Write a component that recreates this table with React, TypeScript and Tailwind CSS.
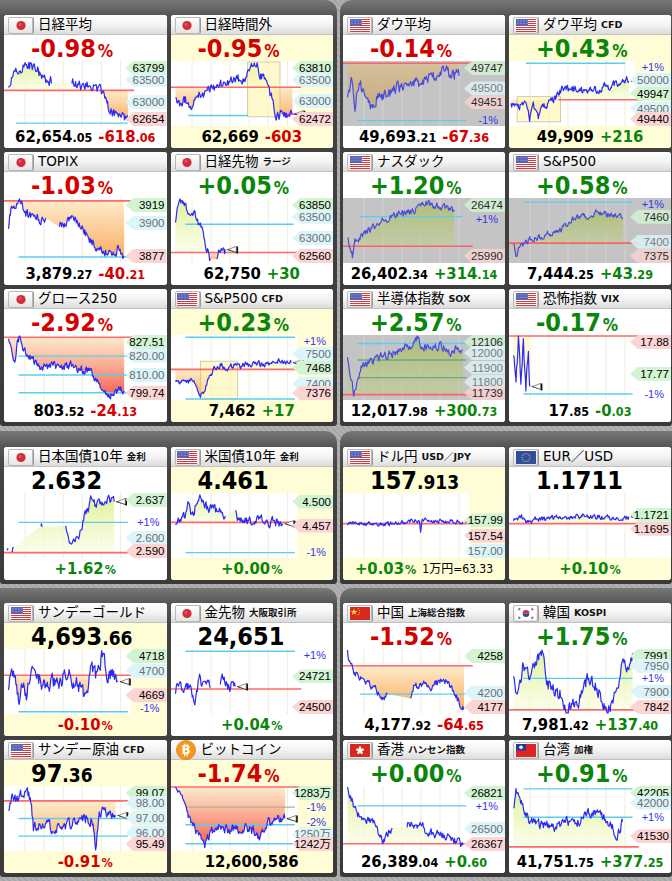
import React from 'react';

type Pt = [number, number];
type FlagKind = 'jp' | 'us' | 'eu' | 'cn' | 'kr' | 'hk' | 'tw' | 'btc';
type Theme = 'w' | 'y' | 'g' | 'wy';
type Val = { m: string; d?: string; p?: boolean; c?: 'r' | 'g' | 'k' };
type LineSpec = { y: number; c: 'r' | 'c' | 'g' | 'm' | 'k'; x0?: number; x1?: number };
type LabelSpec = { y: number; t: string; k: 'hi' | 'lo' | 'gr' | 'pc' };

interface CardData {
    flag: FlagKind;
    title: string;
    sub?: string;
    theme: Theme;
    top: Val;
    bot: Val[];
    note?: string;
    segs: Pt[][];
    amp: number;
    seed: number;
    ref: number;
    fill?: 'auto' | 'red' | 'none';
    lines: LineSpec[];
    labels: LabelSpec[];
    box?: [number, number, number, number];
    softBox?: [number, number, number, number];
    marker?: boolean;
}

const NUM_FONT = "font-['DejaVu_Sans_Condensed','DejaVu_Sans','Noto_Sans_CJK_JP',sans-serif]";
const TITLE_FONT = "font-['DejaVu_Sans','Noto_Sans_CJK_JP',sans-serif]";
const LABEL_FONT = "font-['Liberation_Sans','Noto_Sans_CJK_JP',sans-serif]";

const H = 65;
const px = (x: number) => 2 + x * 124;
const py = (y: number) => 1 + y * (H - 2);

function rng(seed: number) {
    let s = seed * 99991;
    return () => {
        s = (s + 0x6d2b79f5) | 0;
        let t = Math.imul(s ^ (s >>> 15), 1 | s);
        t = (t + Math.imul(t ^ (t >>> 7), 61 | t)) ^ t;
        return ((t ^ (t >>> 14)) >>> 0) / 4294967296;
    };
}

// turn key points into a jagged price line
function build(segs: Pt[][], amp: number, seed: number): Pt[][] {
    const r = rng(seed);
    return segs.map(seg => {
        if (seg.length < 2) return seg;
        const out: Pt[] = [];
        let n = 0;
        for (let i = 0; i < seg.length - 1; i++) {
            const [x0, y0] = seg[i];
            const [x1, y1] = seg[i + 1];
            const steps = Math.max(1, Math.round(((x1 - x0) * 124) / 0.7));
            for (let s = 0; s < steps; s++) {
                const f = s / steps;
                n = n * 0.45 + (r() - 0.5) * amp * 1.7;
                const y = Math.min(1, Math.max(0, y0 + (y1 - y0) * f + n));
                out.push([x0 + (x1 - x0) * f, y]);
            }
        }
        out.push(seg[seg.length - 1]);
        return out;
    });
}

const cards: CardData[] = [
    {
        flag: 'jp', title: '日経平均', theme: 'w',
        top: { m: '-0.98', p: true, c: 'r' },
        bot: [{ m: '62,654', d: '.05' }, { m: '-618', d: '.06', c: 'r' }],
        segs: [
            [[0.02, 0.45], [0.05, 0.25], [0.12, 0.12], [0.2, 0.06], [0.26, 0.15], [0.32, 0.3], [0.37, 0.33]],
            [[0.53, 0.33], [0.6, 0.4], [0.68, 0.36], [0.75, 0.45], [0.8, 0.62], [0.86, 0.82], [0.92, 0.78], [0.98, 0.93]],
        ],
        amp: 0.09, seed: 1, ref: 0.45,
        lines: [{ y: 0.45, c: 'r' }, { y: 0.97, c: 'c', x0: 0.08, x1: 0.98 }],
        labels: [{ y: 0.06, t: '63799', k: 'hi' }, { y: 0.28, t: '63500', k: 'gr' }, { y: 0.64, t: '63000', k: 'gr' }, { y: 0.96, t: '62654', k: 'lo' }],
    },
    {
        flag: 'jp', title: '日経時間外', theme: 'y',
        top: { m: '-0.95', p: true, c: 'r' },
        bot: [{ m: '62,669' }, { m: '-603', c: 'r' }],
        segs: [[[0.02, 0.62], [0.06, 0.68], [0.1, 0.6], [0.14, 0.75], [0.18, 0.55], [0.25, 0.5], [0.32, 0.4], [0.4, 0.35], [0.5, 0.3], [0.58, 0.22], [0.63, 0.1], [0.67, 0.0], [0.7, 0.2], [0.74, 0.3], [0.78, 0.5], [0.8, 0.6], [0.83, 0.88], [0.88, 0.8], [0.92, 0.85], [0.96, 0.82]]],
        amp: 0.08, seed: 2, ref: 0.4,
        lines: [{ y: 0.4, c: 'r' }, { y: 0.85, c: 'c', x0: 0.12, x1: 0.6 }, { y: 0.83, c: 'm', x0: 0.9, x1: 1.06 }],
        box: [0.6, 0.86, 0, 0.87], marker: true,
        labels: [{ y: 0.06, t: '63810', k: 'hi' }, { y: 0.28, t: '63500', k: 'gr' }, { y: 0.62, t: '63000', k: 'gr' }, { y: 0.96, t: '62472', k: 'lo' }],
    },
    {
        flag: 'jp', title: 'TOPIX', theme: 'w',
        top: { m: '-1.03', p: true, c: 'r' },
        bot: [{ m: '3,879', d: '.27' }, { m: '-40', d: '.21', c: 'r' }],
        segs: [
            [[0.02, 0.45], [0.04, 0.15], [0.08, 0.1], [0.12, 0.05], [0.16, 0.25], [0.22, 0.3], [0.28, 0.35], [0.32, 0.3]],
            [[0.43, 0.45], [0.5, 0.3], [0.56, 0.3], [0.6, 0.4], [0.66, 0.6], [0.72, 0.75], [0.8, 0.85], [0.85, 0.95], [0.9, 0.78], [0.95, 0.9]],
        ],
        amp: 0.08, seed: 3, ref: 0.03,
        lines: [{ y: 0.03, c: 'r' }, { y: 0.92, c: 'c', x0: 0.1, x1: 0.98 }],
        labels: [{ y: 0.04, t: '3919', k: 'hi' }, { y: 0.38, t: '3900', k: 'gr' }, { y: 0.97, t: '3877', k: 'lo' }],
    },
    {
        flag: 'jp', title: '日経先物', sub: 'ラージ', theme: 'w',
        top: { m: '+0.05', p: true, c: 'g' },
        bot: [{ m: '62,750' }, { m: '+30', c: 'g' }],
        segs: [
            [[0.02, 0.35], [0.04, 0.08], [0.08, 0.05], [0.12, 0.15], [0.17, 0.25], [0.22, 0.42], [0.26, 0.72], [0.3, 0.95]],
            [[0.35, 0.95], [0.37, 0.75], [0.4, 0.85], [0.42, 0.8]],
        ],
        amp: 0.08, seed: 4, ref: 0.85, marker: true,
        lines: [{ y: 0.85, c: 'r' }, { y: 0.4, c: 'c', x0: 0.1, x1: 0.97 }],
        labels: [{ y: 0.03, t: '63850', k: 'hi' }, { y: 0.28, t: '63500', k: 'gr' }, { y: 0.62, t: '63000', k: 'gr' }, { y: 0.97, t: '62560', k: 'lo' }],
    },
    {
        flag: 'jp', title: 'グロース250', theme: 'w',
        top: { m: '-2.92', p: true, c: 'r' },
        bot: [{ m: '803', d: '.52' }, { m: '-24', d: '.13', c: 'r' }],
        segs: [[[0.02, 0.1], [0.05, 0.35], [0.07, 0.5], [0.09, 0.15], [0.11, 0.0], [0.14, 0.25], [0.18, 0.3], [0.24, 0.45], [0.3, 0.5], [0.4, 0.48], [0.52, 0.47], [0.6, 0.52], [0.68, 0.55], [0.73, 0.7], [0.78, 0.85], [0.84, 0.95], [0.9, 0.85], [0.95, 0.87]]],
        amp: 0.07, seed: 5, ref: 0.02, fill: 'red',
        lines: [{ y: 0.02, c: 'r' }, { y: 0.32, c: 'c', x0: 0.1, x1: 0.98 }, { y: 0.62, c: 'c', x0: 0.1, x1: 0.98 }, { y: 0.9, c: 'c', x0: 0.1, x1: 0.98 }],
        labels: [{ y: 0.03, t: '827.51', k: 'hi' }, { y: 0.31, t: '820.00', k: 'gr' }, { y: 0.62, t: '810.00', k: 'gr' }, { y: 0.96, t: '799.74', k: 'lo' }],
    },
    {
        flag: 'us', title: 'S&P500', sub: 'CFD', theme: 'y',
        top: { m: '+0.23', p: true, c: 'g' },
        bot: [{ m: '7,462' }, { m: '+17', c: 'g' }],
        segs: [[[0.02, 0.72], [0.08, 0.75], [0.14, 0.7], [0.18, 0.78], [0.22, 0.98], [0.26, 0.8], [0.32, 0.55], [0.38, 0.45], [0.42, 0.5], [0.5, 0.47], [0.6, 0.45], [0.72, 0.44], [0.85, 0.41], [0.95, 0.42]]],
        amp: 0.05, seed: 6, ref: 0.53, box: [0.22, 0.52, 0.4, 1], marker: true,
        lines: [{ y: 0.02, c: 'c', x0: 0.1, x1: 0.98 }, { y: 0.53, c: 'r' }, { y: 1, c: 'c', x0: 0.1, x1: 0.98 }],
        labels: [{ y: 0.0, t: '+1%', k: 'pc' }, { y: 0.28, t: '7500', k: 'gr' }, { y: 0.5, t: '7468', k: 'hi' }, { y: 0.76, t: '7400', k: 'gr' }, { y: 0.99, t: '7376', k: 'lo' }],
    },
    {
        flag: 'us', title: 'ダウ平均', theme: 'g',
        top: { m: '-0.14', p: true, c: 'r' },
        bot: [{ m: '49,693', d: '.21' }, { m: '-67', d: '.36', c: 'r' }],
        segs: [[[0.02, 0.55], [0.05, 0.3], [0.08, 0.7], [0.12, 0.35], [0.16, 0.55], [0.2, 0.7], [0.26, 0.55], [0.35, 0.5], [0.45, 0.4], [0.55, 0.35], [0.65, 0.3], [0.75, 0.2], [0.82, 0.15], [0.87, 0.22], [0.92, 0.22]]],
        amp: 0.1, seed: 7, ref: 0.02,
        lines: [{ y: 0.02, c: 'r' }, { y: 0.93, c: 'c', x0: 0.1, x1: 0.98 }],
        labels: [{ y: 0.04, t: '49747', k: 'hi' }, { y: 0.42, t: '49500', k: 'gr' }, { y: 0.64, t: '49451', k: 'lo' }, { y: 0.96, t: '-1%', k: 'pc' }],
    },
    {
        flag: 'us', title: 'ダウ平均', sub: 'CFD', theme: 'y',
        top: { m: '+0.43', p: true, c: 'g' },
        bot: [{ m: '49,909' }, { m: '+216', c: 'g' }],
        segs: [[[0.0, 0.68], [0.08, 0.7], [0.12, 0.65], [0.15, 0.9], [0.18, 0.65], [0.22, 0.92], [0.26, 0.7], [0.3, 0.65], [0.36, 0.6], [0.4, 0.45], [0.5, 0.42], [0.6, 0.45], [0.72, 0.43], [0.82, 0.38], [0.9, 0.33], [0.95, 0.3]]],
        amp: 0.07, seed: 8, ref: 0.6, box: [0.05, 0.4, 0.55, 0.95], marker: true,
        lines: [{ y: 0.02, c: 'c', x0: 0.12, x1: 0.92 }, { y: 0.6, c: 'r', x0: 0.38, x1: 1.06 }],
        labels: [{ y: 0.0, t: '+1%', k: 'pc' }, { y: 0.28, t: '50000', k: 'gr' }, { y: 0.5, t: '49947', k: 'hi' }, { y: 0.74, t: '49500', k: 'gr' }, { y: 0.99, t: '49440', k: 'lo' }],
    },
    {
        flag: 'us', title: 'ナスダック', theme: 'g',
        top: { m: '+1.20', p: true, c: 'g' },
        bot: [{ m: '26,402', d: '.34' }, { m: '+314', d: '.14', c: 'g' }],
        segs: [[[0.02, 0.6], [0.04, 0.75], [0.06, 0.9], [0.08, 0.7], [0.12, 0.65], [0.18, 0.5], [0.25, 0.45], [0.32, 0.35], [0.4, 0.25], [0.48, 0.25], [0.56, 0.18], [0.62, 0.05], [0.7, 0.1], [0.78, 0.12], [0.84, 0.15], [0.88, 0.2]]],
        amp: 0.06, seed: 9, ref: 0.75,
        lines: [{ y: 0.28, c: 'c', x0: 0.12, x1: 0.95 }, { y: 0.75, c: 'r' }],
        labels: [{ y: 0.05, t: '26474', k: 'hi' }, { y: 0.32, t: '+1%', k: 'pc' }, { y: 0.95, t: '25990', k: 'lo' }],
    },
    {
        flag: 'us', title: 'S&P500', theme: 'g',
        top: { m: '+0.58', p: true, c: 'g' },
        bot: [{ m: '7,444', d: '.25' }, { m: '+43', d: '.29', c: 'g' }],
        segs: [[[0.02, 0.7], [0.04, 0.9], [0.08, 0.75], [0.14, 0.65], [0.22, 0.6], [0.3, 0.55], [0.4, 0.48], [0.46, 0.38], [0.52, 0.3], [0.62, 0.28], [0.7, 0.2], [0.78, 0.25], [0.84, 0.22], [0.9, 0.32]]],
        amp: 0.05, seed: 10, ref: 0.7,
        lines: [{ y: 0.05, c: 'c', x0: 0.1, x1: 0.98 }, { y: 0.7, c: 'r' }],
        labels: [{ y: 0.0, t: '+1%', k: 'pc' }, { y: 0.28, t: '7460', k: 'hi' }, { y: 0.68, t: '7400', k: 'gr' }, { y: 0.96, t: '7375', k: 'lo' }],
    },
    {
        flag: 'us', title: '半導体指数', sub: 'SOX', theme: 'g',
        top: { m: '+2.57', p: true, c: 'g' },
        bot: [{ m: '12,017', d: '.98' }, { m: '+300', d: '.73', c: 'g' }],
        segs: [[[0.02, 0.3], [0.04, 0.6], [0.07, 0.9], [0.1, 0.75], [0.13, 0.45], [0.18, 0.45], [0.25, 0.35], [0.35, 0.3], [0.45, 0.2], [0.52, 0.15], [0.58, 0.05], [0.62, 0.15], [0.7, 0.2], [0.78, 0.15], [0.84, 0.25], [0.88, 0.22], [0.95, 0.22]]],
        amp: 0.07, seed: 11, ref: 0.93,
        lines: [{ y: 0.12, c: 'c', x0: 0.1, x1: 0.98 }, { y: 0.38, c: 'g', x0: 0.1, x1: 0.98 }, { y: 0.66, c: 'g', x0: 0.1, x1: 0.98 }, { y: 0.93, c: 'r' }],
        labels: [{ y: 0.04, t: '12106', k: 'hi' }, { y: 0.27, t: '12000', k: 'gr' }, { y: 0.5, t: '11900', k: 'gr' }, { y: 0.73, t: '11800', k: 'gr' }, { y: 0.96, t: '11739', k: 'lo' }],
    },
    {
        flag: 'us', title: '恐怖指数', sub: 'VIX', theme: 'w',
        top: { m: '-0.17', p: true, c: 'g' },
        bot: [{ m: '17', d: '.85' }, { m: '-0', d: '.03', c: 'g' }],
        segs: [[[0.02, 0.3], [0.04, 0.75], [0.06, 0.05], [0.08, 0.8], [0.1, 0.1], [0.12, 0.85], [0.14, 0.2], [0.15, 0.8]]],
        amp: 0.1, seed: 12, ref: 0, fill: 'none', softBox: [0.02, 0.16, 0, 0.65], marker: true,
        lines: [{ y: 0.0, c: 'r' }, { y: 0.92, c: 'c', x0: 0.1, x1: 0.98 }],
        labels: [{ y: 0.02, t: '17.88', k: 'lo' }, { y: 0.6, t: '17.77', k: 'hi' }, { y: 0.94, t: '-1%', k: 'pc' }],
    },
    {
        flag: 'jp', title: '日本国債10年', sub: '金利', theme: 'w',
        top: { m: '2.632', c: 'k' },
        bot: [{ m: '+1.62', p: true, c: 'g' }],
        segs: [
            [[0.01, 0.85], [0.015, 0.86]],
            [[0.05, 0.9], [0.06, 0.86]],
            [[0.28, 0.5], [0.29, 0.52]],
            [[0.48, 0.52], [0.5, 0.72], [0.52, 0.77], [0.55, 0.72], [0.58, 0.65], [0.6, 0.62], [0.63, 0.3], [0.66, 0.25], [0.68, 0.05], [0.72, 0.2], [0.75, 0.05], [0.78, 0.2], [0.82, 0.1], [0.87, 0.12]],
        ],
        amp: 0.07, seed: 13, ref: 0.93, marker: true,
        lines: [{ y: 0.93, c: 'r' }, { y: 0.45, c: 'c', x0: 0.1, x1: 0.98 }],
        labels: [{ y: 0.08, t: '2.637', k: 'hi' }, { y: 0.45, t: '+1%', k: 'pc' }, { y: 0.7, t: '2.600', k: 'gr' }, { y: 0.95, t: '2.590', k: 'lo' }],
    },
    {
        flag: 'us', title: '米国債10年', sub: '金利', theme: 'y',
        top: { m: '4.461', c: 'k' },
        bot: [{ m: '+0.00', p: true, c: 'g' }],
        segs: [
            [[0.02, 0.45], [0.08, 0.4], [0.12, 0.2], [0.16, 0.35], [0.2, 0.05], [0.26, 0.2], [0.32, 0.25], [0.38, 0.3], [0.42, 0.35]],
            [[0.5, 0.3], [0.54, 0.45], [0.62, 0.43], [0.7, 0.38], [0.76, 0.45], [0.82, 0.42], [0.88, 0.47]],
        ],
        amp: 0.08, seed: 14, ref: 0.45, marker: true,
        lines: [{ y: 0.45, c: 'r' }, { y: 0.93, c: 'c', x0: 0.1, x1: 0.98 }],
        labels: [{ y: 0.12, t: '4.500', k: 'hi' }, { y: 0.5, t: '4.457', k: 'lo' }, { y: 0.93, t: '-1%', k: 'pc' }],
    },
    {
        flag: 'us', title: 'ドル円', sub: 'USD／JPY', theme: 'y',
        top: { m: '157', d: '.913', c: 'k' },
        bot: [{ m: '+0.03', p: true, c: 'g' }], note: '1万円=63.33',
        segs: [[[0.02, 0.47], [0.3, 0.48], [0.5, 0.45], [0.58, 0.42], [0.6, 0.45], [0.61, 0.62], [0.62, 0.42], [0.8, 0.43], [0.95, 0.44]]],
        amp: 0.035, seed: 15, ref: 0.47, fill: 'none', marker: true,
        lines: [{ y: 0.47, c: 'r' }],
        labels: [{ y: 0.42, t: '157.99', k: 'hi' }, { y: 0.66, t: '157.54', k: 'lo' }, { y: 0.92, t: '157.00', k: 'gr' }],
    },
    {
        flag: 'eu', title: 'EUR／USD', theme: 'wy',
        top: { m: '1.1711', c: 'k' },
        bot: [{ m: '+0.10', p: true, c: 'g' }],
        segs: [[[0.02, 0.4], [0.08, 0.35], [0.12, 0.47], [0.2, 0.4], [0.35, 0.38], [0.5, 0.35], [0.7, 0.36], [0.85, 0.37], [0.95, 0.36]]],
        amp: 0.045, seed: 16, ref: 0.47, marker: true,
        lines: [{ y: 0.47, c: 'r' }],
        labels: [{ y: 0.33, t: '1.1721', k: 'hi' }, { y: 0.55, t: '1.1695', k: 'lo' }],
    },
    {
        flag: 'us', title: 'サンデーゴールド', theme: 'y',
        top: { m: '4,693', d: '.66', c: 'k' },
        bot: [{ m: '-0.10', p: true, c: 'r' }],
        segs: [[[0.02, 0.55], [0.04, 0.35], [0.06, 0.4], [0.08, 0.6], [0.1, 0.85], [0.13, 0.5], [0.17, 0.7], [0.2, 0.35], [0.24, 0.4], [0.28, 0.5], [0.32, 0.65], [0.36, 0.5], [0.42, 0.5], [0.48, 0.4], [0.54, 0.45], [0.6, 0.6], [0.64, 0.8], [0.68, 0.3], [0.72, 0.4], [0.78, 0.05], [0.82, 0.45], [0.86, 0.35], [0.9, 0.5]]],
        amp: 0.13, seed: 17, ref: 0.4, marker: true,
        lines: [{ y: 0.4, c: 'r' }, { y: 0.98, c: 'c', x0: 0.1, x1: 0.98 }],
        labels: [{ y: 0.03, t: '4718', k: 'hi' }, { y: 0.33, t: '4700', k: 'gr' }, { y: 0.72, t: '4669', k: 'lo' }, { y: 0.98, t: '-1%', k: 'pc' }],
    },
    {
        flag: 'jp', title: '金先物', sub: '大阪取引所', theme: 'w',
        top: { m: '24,651', c: 'k' },
        bot: [{ m: '+0.04', p: true, c: 'g' }],
        segs: [
            [[0.02, 0.62], [0.05, 0.5], [0.08, 0.7], [0.12, 0.55], [0.15, 0.6], [0.17, 0.95], [0.19, 0.6], [0.22, 0.45], [0.25, 0.6], [0.3, 0.6]],
            [[0.38, 0.5], [0.4, 0.42], [0.44, 0.6], [0.5, 0.58]],
        ],
        amp: 0.1, seed: 18, ref: 0.62, fill: 'none', marker: true,
        lines: [{ y: 0.02, c: 'c', x0: 0.1, x1: 0.98 }, { y: 0.62, c: 'r' }],
        labels: [{ y: 0.02, t: '+1%', k: 'pc' }, { y: 0.42, t: '24721', k: 'hi' }, { y: 0.96, t: '24500', k: 'lo' }],
    },
    {
        flag: 'us', title: 'サンデー原油', sub: 'CFD', theme: 'y',
        top: { m: '97', d: '.36', c: 'k' },
        bot: [{ m: '-0.91', p: true, c: 'r' }],
        segs: [[[0.02, 0.3], [0.05, 0.15], [0.1, 0.2], [0.15, 0.05], [0.2, 0.2], [0.22, 0.65], [0.3, 0.6], [0.4, 0.65], [0.5, 0.6], [0.6, 0.55], [0.65, 0.5], [0.7, 0.55], [0.72, 1.0], [0.75, 0.45], [0.78, 0.35], [0.82, 0.4], [0.85, 0.5], [0.88, 0.45]]],
        amp: 0.09, seed: 19, ref: 0.22, marker: true,
        lines: [{ y: 0.22, c: 'r' }, { y: 0.5, c: 'c', x0: 0.1, x1: 0.98 }, { y: 0.78, c: 'c', x0: 0.1, x1: 0.98 }],
        labels: [{ y: 0.02, t: '99.07', k: 'hi' }, { y: 0.25, t: '98.00', k: 'gr' }, { y: 0.49, t: '97.00', k: 'gr' }, { y: 0.73, t: '96.00', k: 'gr' }, { y: 0.99, t: '95.49', k: 'lo' }],
    },
    {
        flag: 'btc', title: 'ビットコイン', theme: 'y',
        top: { m: '-1.74', p: true, c: 'r' },
        bot: [{ m: '12,600,586' }],
        segs: [[[0.02, 0.0], [0.05, 0.1], [0.1, 0.35], [0.15, 0.6], [0.2, 0.75], [0.25, 0.95], [0.3, 0.75], [0.38, 0.6], [0.45, 0.7], [0.55, 0.65], [0.65, 0.7], [0.7, 0.85], [0.75, 0.6], [0.82, 0.5], [0.9, 0.5]]],
        amp: 0.08, seed: 20, ref: 0.0, fill: 'red', marker: true,
        lines: [{ y: 0.0, c: 'r' }, { y: 0.32, c: 'k', x0: 0.1, x1: 0.98 }, { y: 0.6, c: 'c', x0: 0.1, x1: 0.98 }, { y: 0.9, c: 'c', x0: 0.1, x1: 0.98 }],
        labels: [{ y: 0.02, t: '1283万', k: 'hi' }, { y: 0.32, t: '-1%', k: 'pc' }, { y: 0.55, t: '-2%', k: 'pc' }, { y: 0.75, t: '1250万', k: 'gr' }, { y: 0.98, t: '1242万', k: 'lo' }],
    },
    {
        flag: 'cn', title: '中国', sub: '上海総合指数', theme: 'w',
        top: { m: '-1.52', p: true, c: 'r' },
        bot: [{ m: '4,177', d: '.92' }, { m: '-64', d: '.65', c: 'r' }],
        segs: [
            [[0.02, 0.0], [0.03, 0.2], [0.06, 0.3], [0.1, 0.4], [0.15, 0.5], [0.2, 0.55], [0.25, 0.6], [0.28, 0.75], [0.31, 0.8], [0.34, 0.7]],
            [[0.53, 0.72], [0.56, 0.55], [0.6, 0.6], [0.64, 0.5], [0.7, 0.6], [0.76, 0.5], [0.8, 0.45], [0.85, 0.6], [0.9, 0.75], [0.94, 0.9], [0.96, 0.92]],
        ],
        amp: 0.06, seed: 21, ref: 0.25,
        lines: [{ y: 0.25, c: 'r' }, { y: 0.7, c: 'c', x0: 0.12, x1: 0.97 }],
        labels: [{ y: 0.05, t: '4258', k: 'hi' }, { y: 0.68, t: '4200', k: 'gr' }, { y: 0.96, t: '4177', k: 'lo' }],
    },
    {
        flag: 'kr', title: '韓国', sub: 'KOSPI', theme: 'w',
        top: { m: '+1.75', p: true, c: 'g' },
        bot: [{ m: '7,981', d: '.42' }, { m: '+137', d: '.40', c: 'g' }],
        segs: [[[0.02, 0.5], [0.05, 0.8], [0.1, 0.2], [0.15, 0.4], [0.2, 0.2], [0.25, 0.0], [0.3, 0.55], [0.4, 0.7], [0.45, 0.95], [0.55, 0.8], [0.62, 0.45], [0.68, 0.55], [0.75, 0.85], [0.8, 0.9], [0.85, 0.6], [0.9, 0.2], [0.95, 0.3], [0.98, 0.05]]],
        amp: 0.11, seed: 22, ref: 0.95,
        lines: [{ y: 0.95, c: 'r' }, { y: 0.45, c: 'c', x0: 0.1, x1: 0.98 }],
        labels: [{ y: 0.03, t: '7991', k: 'hi' }, { y: 0.25, t: '7950', k: 'gr' }, { y: 0.45, t: '+1%', k: 'pc' }, { y: 0.66, t: '7900', k: 'gr' }, { y: 0.98, t: '7842', k: 'lo' }],
    },
    {
        flag: 'hk', title: '香港', sub: 'ハンセン指数', theme: 'w',
        top: { m: '+0.00', p: true, c: 'g' },
        bot: [{ m: '26,389', d: '.04' }, { m: '+0', d: '.60', c: 'g' }],
        segs: [
            [[0.02, 0.0], [0.05, 0.2], [0.12, 0.5], [0.18, 0.5], [0.25, 0.6], [0.3, 0.85], [0.38, 0.65]],
            [[0.5, 0.6], [0.6, 0.6], [0.7, 0.75], [0.85, 0.8], [0.95, 0.92]],
        ],
        amp: 0.07, seed: 23, ref: 0.9,
        lines: [{ y: 0.9, c: 'r' }, { y: 0.3, c: 'c', x0: 0.1, x1: 0.98 }],
        labels: [{ y: 0.03, t: '26821', k: 'hi' }, { y: 0.3, t: '+1%', k: 'pc' }, { y: 0.66, t: '26500', k: 'gr' }, { y: 0.96, t: '26367', k: 'lo' }],
    },
    {
        flag: 'tw', title: '台湾', sub: '加権', theme: 'w',
        top: { m: '+0.91', p: true, c: 'g' },
        bot: [{ m: '41,751', d: '.75' }, { m: '+377', d: '.25', c: 'g' }],
        segs: [[[0.02, 0.3], [0.04, 0.05], [0.1, 0.3], [0.15, 0.55], [0.25, 0.6], [0.35, 0.65], [0.45, 0.55], [0.55, 0.55], [0.65, 0.4], [0.72, 0.45], [0.8, 0.55], [0.85, 0.8], [0.9, 0.55]]],
        amp: 0.08, seed: 24, ref: 0.95,
        lines: [{ y: 0.03, c: 'c', x0: 0.1, x1: 0.98 }, { y: 0.48, c: 'c', x0: 0.1, x1: 0.98 }, { y: 0.95, c: 'r' }],
        labels: [{ y: 0.0, t: '42205', k: 'hi' }, { y: 0.25, t: '42000', k: 'gr' }, { y: 0.48, t: '+1%', k: 'pc' }, { y: 0.78, t: '41530', k: 'lo' }],
    },
];

const FlagArt: React.FC<{ k: FlagKind }> = ({ k }) => {
    if (k === 'jp') {
        return (
            <svg width="20" height="13" viewBox="0 0 20 13">
                <circle cx="10" cy="6.5" r="4.6" fill="#d42a3a" />
                <circle cx="9" cy="5.4" r="1.6" fill="#ec6a74" opacity="0.6" />
            </svg>
        );
    }
    if (k === 'us') {
        return (
            <svg width="20" height="13" viewBox="0 0 20 13">
                <rect width="20" height="13" fill="#ffffff" />
                {[0, 2, 4, 6, 8, 10, 12].map(y => <rect key={y} y={y} width="20" height="1" fill="#d8383c" />)}
                <rect width="12" height="7" fill="#5a62b4" />
                {[2, 5, 8, 11].map(x => [1.8, 4.2].map(y => <circle key={`${x}-${y}`} cx={x} cy={y} r="0.5" fill="#c8ccf0" />))}
            </svg>
        );
    }
    if (k === 'eu') {
        return (
            <svg width="20" height="13" viewBox="0 0 20 13">
                <rect width="20" height="13" fill="#2f4f9e" />
                {Array.from({ length: 12 }, (_, i) => {
                    const a = (i / 12) * Math.PI * 2;
                    return <circle key={i} cx={10 + Math.cos(a) * 4} cy={6.5 + Math.sin(a) * 4} r="0.6" fill="#f2d23a" />;
                })}
            </svg>
        );
    }
    if (k === 'cn') {
        return (
            <svg width="20" height="13" viewBox="0 0 20 13">
                <rect width="20" height="13" fill="#d8291c" />
                <polygon points="4,1.5 4.9,4 7.5,4 5.4,5.5 6.2,8 4,6.5 1.8,8 2.6,5.5 0.5,4 3.1,4" fill="#f7d23a" />
                <circle cx="8.5" cy="1.8" r="0.6" fill="#f7d23a" />
                <circle cx="9.5" cy="3.6" r="0.6" fill="#f7d23a" />
                <circle cx="9.5" cy="5.8" r="0.6" fill="#f7d23a" />
                <circle cx="8.5" cy="7.5" r="0.6" fill="#f7d23a" />
            </svg>
        );
    }
    if (k === 'kr') {
        return (
            <svg width="20" height="13" viewBox="0 0 20 13">
                <rect width="20" height="13" fill="#ffffff" />
                <path d="M6.6 6.5a3.4 3.4 0 0 1 6.8 0z" fill="#d43040" />
                <path d="M6.6 6.5a3.4 3.4 0 0 0 6.8 0z" fill="#2a4aa0" />
                <path d="M2 2.5l2-1.5M2.6 3.3l2-1.5M15.5 1l2 1.5M15 1.8l2 1.5M2 10.5l2 1.5M2.6 9.7l2 1.5M15.5 12l2-1.5M15 11.2l2-1.5" stroke="#222" strokeWidth="0.7" />
            </svg>
        );
    }
    if (k === 'hk') {
        return (
            <svg width="20" height="13" viewBox="0 0 20 13">
                <rect width="20" height="13" fill="#d8291c" />
                {[0, 72, 144, 216, 288].map(a => (
                    <ellipse key={a} cx="10" cy="4.4" rx="1.2" ry="2.1" fill="#ffffff" transform={`rotate(${a} 10 6.5)`} />
                ))}
            </svg>
        );
    }
    // tw
    return (
        <svg width="20" height="13" viewBox="0 0 20 13">
            <rect width="20" height="13" fill="#e02424" />
            <rect width="10" height="6.5" fill="#1f3c9c" />
            <circle cx="5" cy="3.25" r="1.8" fill="#ffffff" />
        </svg>
    );
};

const Flag: React.FC<{ k: FlagKind }> = ({ k }) => {
    if (k === 'btc') {
        return (
            <svg width="20" height="20" viewBox="0 0 20 20" className="ml-[5px] shrink-0">
                <circle cx="10" cy="10" r="9.5" fill="#f39a1e" />
                <circle cx="10" cy="10" r="9.5" fill="none" stroke="#d87c10" strokeWidth="0.8" />
                <path d="M8.6 3.8v2.4M11 3.8v2.4M8.6 13.8v2.4M11 13.8v2.4" stroke="#ffffff" strokeWidth="1.2" />
                <text x="10.2" y="14.4" textAnchor="middle" fontSize="12" fontWeight="bold" fill="#ffffff" fontFamily="DejaVu Sans, sans-serif">B</text>
            </svg>
        );
    }
    return (
        <div className="ml-[4px] self-end flex h-[17px] w-[25px] shrink-0 items-center justify-center rounded-[2px] border border-[#b8b8b8] bg-[linear-gradient(#ffffff,#e4e4e4)] shadow-[1px_0_0_#9a9a9a]">
            <FlagArt k={k} />
        </div>
    );
};

const colorOf = (c?: 'r' | 'g' | 'k') => (c === 'r' ? 'text-[#d40000]' : c === 'g' ? 'text-[#0a850a]' : 'text-black');

const BigVal: React.FC<{ v: Val }> = ({ v }) => (
    <span className={`${colorOf(v.c)} leading-none`}>
        <span className="text-[25px]">{v.m}</span>
        {v.d && <span className="text-[19px]">{v.d}</span>}
        {v.p && <span className="ml-[2px] text-[17px]">%</span>}
    </span>
);

const SmallVal: React.FC<{ v: Val }> = ({ v }) => (
    <span className={`${colorOf(v.c)} leading-none`}>
        <span className="text-[16.5px]">{v.m}</span>
        {v.d && <span className="text-[12.5px]">{v.d}</span>}
        {v.p && <span className="ml-[1px] text-[12.5px]">%</span>}
    </span>
);

const Chart: React.FC<{ c: CardData; id: string }> = ({ c, id }) => {
    const gray = c.theme === 'g';
    const segs = build(c.segs, c.amp, c.seed).map(s => s.map(([x, y]) => [px(x), py(y)] as Pt));
    const all = segs.flat();
    const ry = py(c.ref);
    const fx = all[0][0];
    const lx = all[all.length - 1][0];
    const ly = all[all.length - 1][1];
    const upPts = all.map(([x, y]) => `${x.toFixed(1)},${Math.min(y, ry).toFixed(1)}`).join(' ') + ` ${lx},${ry} ${fx},${ry}`;
    const dnPts = all.map(([x, y]) => `${x.toFixed(1)},${Math.max(y, ry).toFixed(1)}`).join(' ') + ` ${lx},${ry} ${fx},${ry}`;
    const fill = c.fill ?? 'auto';

    const stroke = { r: '#ff5a5a', c: '#5ccdf2', g: '#6aaa86', m: '#ff3cff', k: '#b8ae92' };
    const grid = gray ? '#d4d4d4' : '#efedd6';
    const bg = gray
        ? 'bg-[#c4c4c4]'
        : c.theme === 'y'
            ? 'bg-[linear-gradient(to_right,#ffffff_78%,#fefdd8_78%)]'
            : 'bg-white';

    return (
        <div className={`relative h-[65px] ${bg}`}>
            <svg className="absolute inset-0" width="100%" height="65" viewBox="0 0 162 65" preserveAspectRatio="none">
                <defs>
                    <linearGradient id={`${id}u`} x1="0" y1="0" x2="0" y2="1">
                        <stop offset="0" stopColor={gray ? '#a6bd62' : '#dcef8c'} stopOpacity={gray ? 0.8 : 0.9} />
                        <stop offset="1" stopColor={gray ? '#c2cc94' : '#fbfde4'} stopOpacity={gray ? 0.6 : 0.7} />
                    </linearGradient>
                    <linearGradient id={`${id}d`} x1="0" y1="0" x2="0" y2="1">
                        <stop offset="0" stopColor={gray ? '#d6bf94' : '#fde8c2'} stopOpacity="0.85" />
                        <stop offset="1" stopColor={fill === 'red' ? '#f2483a' : gray ? '#c6a874' : '#f9a24c'} stopOpacity="0.9" />
                    </linearGradient>
                </defs>
                {[21, 40, 59, 78, 97, 116].map(x => (
                    <line key={x} x1={x} y1="0" x2={x} y2={H} stroke={grid} strokeWidth="1" />
                ))}
                {c.softBox && (
                    <rect x={px(c.softBox[0])} y={py(c.softBox[2])} width={px(c.softBox[1]) - px(c.softBox[0])} height={py(c.softBox[3]) - py(c.softBox[2])} fill="#fffad0" />
                )}
                {fill !== 'none' && (
                    <>
                        <polygon points={upPts} fill={`url(#${id}u)`} />
                        <polygon points={dnPts} fill={`url(#${id}d)`} />
                    </>
                )}
                {c.box && (
                    <rect x={px(c.box[0])} y={py(c.box[2])} width={px(c.box[1]) - px(c.box[0])} height={py(c.box[3]) - py(c.box[2])} fill="#fff6a6" fillOpacity="0.55" stroke="#c8c29c" strokeWidth="0.8" />
                )}
                {c.lines.map((l, i) => {
                    const x0 = l.x0 ?? -0.02;
                    const x1 = l.x1 ?? 1.03;
                    return (
                        <line key={i} x1={px(x0)} y1={py(l.y)} x2={px(x1)} y2={py(l.y)} stroke={stroke[l.c]} strokeWidth={l.c === 'r' ? 1.6 : 1.4} strokeOpacity={l.c === 'r' ? 0.9 : 1} />
                    );
                })}
                {segs.map((s, i) => (
                    <polyline key={i} points={s.map(([x, y]) => `${x.toFixed(1)},${y.toFixed(1)}`).join(' ')} fill="none" stroke={gray ? '#4c4cdc' : '#2a2af6'} strokeWidth="1.2" strokeLinejoin="round" />
                ))}
                {c.marker && (
                    <>
                        <polyline points={`${lx + 2},${ly} ${lx + 12},${ly + 3}`} fill="none" stroke="#111" strokeWidth="1" />
                        <polygon points={`${lx + 3},${ly} ${lx + 11},${ly - 3} ${lx + 11},${ly + 3}`} fill="#ffffff" stroke="#444" strokeWidth="0.6" />
                        <line x1={lx + 12} y1={ly - 3} x2={lx + 12} y2={ly + 4} stroke="#111" strokeWidth="1.6" />
                    </>
                )}
            </svg>
            {c.labels.map((lb, i) => {
                if (lb.k === 'pc') {
                    const top = Math.min(Math.max(py(lb.y) - 6, 0), H - 12);
                    return (
                        <div key={i} className={`${LABEL_FONT} absolute right-[7px] text-[11px] leading-[12px] text-[#3434ee]`} style={{ top }}>
                            {lb.t}
                        </div>
                    );
                }
                const top = Math.min(Math.max(py(lb.y) - 7, 0), H - 14);
                const tone =
                    lb.k === 'hi'
                        ? 'bg-[#d2f4d2] text-black'
                        : lb.k === 'lo'
                            ? 'bg-[#fbd4d4] text-black'
                            : 'bg-[#dcf5fb] text-[#6e6e6e]';
                return (
                    <div
                        key={i}
                        className={`${LABEL_FONT} ${tone} ${gray ? 'opacity-80' : ''} absolute right-0 h-[14px] w-[41px] pr-[2px] text-right text-[11.5px] leading-[14px] [clip-path:polygon(8px_0,100%_0,100%_100%,8px_100%,0_50%)]`}
                        style={{ top }}
                    >
                        {lb.t}
                    </div>
                );
            })}
        </div>
    );
};

const Card: React.FC<{ c: CardData; id: string }> = ({ c, id }) => {
    const yellowTop = c.theme === 'y';
    const yellowBot = c.theme === 'y' || c.theme === 'wy';
    return (
        <div className="flex h-[133px] flex-col overflow-hidden rounded-[3px] bg-white">
            <div className="flex h-[20px] items-center border-b border-[#c2c2c2] bg-[linear-gradient(#ffffff,#f4f4f4_50%,#dcdcdc)]">
                <Flag k={c.flag} />
                <span className={`${TITLE_FONT} ml-[5px] whitespace-nowrap text-[13.5px] leading-none text-black`}>{c.title}</span>
                {c.sub && <span className={`${TITLE_FONT} ml-[4px] whitespace-nowrap text-[9.5px] font-bold leading-none text-[#111]`}>{c.sub}</span>}
            </div>
            <div className={`${NUM_FONT} flex h-[26px] items-center pl-[27px] font-bold ${yellowTop ? 'bg-[#fefdd5]' : 'bg-white'}`}>
                <BigVal v={c.top} />
            </div>
            <Chart c={c} id={id} />
            <div className={`${NUM_FONT} flex h-[22px] items-center justify-center gap-[6px] font-bold ${yellowBot ? 'bg-[#fefdd5]' : 'bg-white'}`}>
                {c.bot.map((v, i) => <SmallVal key={i} v={v} />)}
                {c.note && <span className={`${NUM_FONT} text-[12px] font-normal leading-none text-black`}>{c.note}</span>}
            </div>
        </div>
    );
};

const Panel: React.FC<{ list: number[]; side: 'l' | 'r'; pad: string }> = ({ list, side, pad }) => (
    <div
        className={`${side === 'l' ? 'w-[337px] shrink-0 rounded-tr-[12px] pl-[4px] pr-[4px]' : 'flex-1 rounded-tl-[12px] pl-[3px] pr-[1px]'} ${pad} rounded-b-[3px] pb-[4px] bg-[linear-gradient(to_bottom,#787878,#545454_16px,#444444_40px,#3a3a3a)]`}
    >
        <div className="grid grid-cols-2 gap-[4px]">
            {list.map(i => <Card key={i} c={cards[i]} id={`cd${i}`} />)}
        </div>
    </div>
);

export default function App() {
    return (
        <div className="flex h-[881px] w-[672px] flex-col overflow-hidden bg-[repeating-linear-gradient(45deg,#b2b2b2_0px,#b2b2b2_2px,#a6a6a6_2px,#a6a6a6_4px)]">
            <div className="flex h-[426px] gap-[3px]">
                <Panel list={[0, 1, 2, 3, 4, 5]} side="l" pad="pt-[15px]" />
                <Panel list={[6, 7, 8, 9, 10, 11]} side="r" pad="pt-[15px]" />
            </div>
            <div className="mt-[5px] flex h-[153px] gap-[3px]">
                <Panel list={[12, 13]} side="l" pad="pt-[16px]" />
                <Panel list={[14, 15]} side="r" pad="pt-[16px]" />
            </div>
            <div className="mt-[4px] flex h-[289px] gap-[3px]">
                <Panel list={[16, 17, 18, 19]} side="l" pad="pt-[15px]" />
                <Panel list={[20, 21, 22, 23]} side="r" pad="pt-[15px]" />
            </div>
        </div>
    );
}
